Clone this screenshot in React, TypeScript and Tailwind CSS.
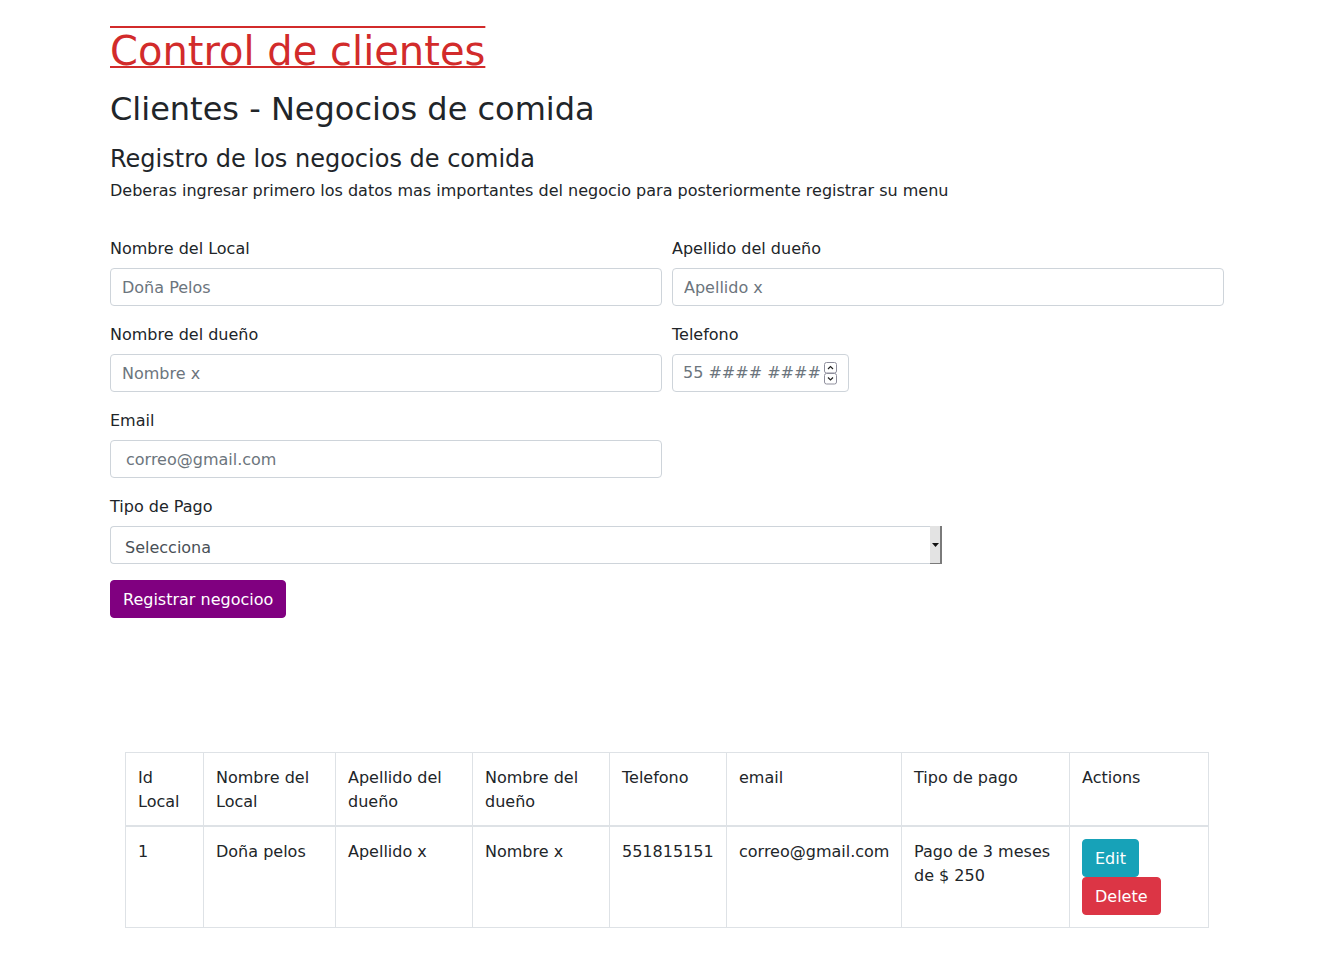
const headers = [
  { label: "Id Local", w: "w-[78px]" },
  { label: "Nombre del Local", w: "w-[132px]" },
  { label: "Apellido del dueño", w: "w-[137px]" },
  { label: "Nombre del dueño", w: "w-[137px]" },
  { label: "Telefono", w: "w-[117px]" },
  { label: "email", w: "w-[175px]" },
  { label: "Tipo de pago", w: "w-[168px]" },
  { label: "Actions", w: "w-[139px]" },
]

const clientes = [
  {
    id: 1,
    local: "Doña pelos",
    apellido: "Apellido x",
    nombre: "Nombre x",
    telefono: "551815151",
    email: "correo@gmail.com",
    pago: "Pago de 3 meses de $ 250",
  },
]

const cell = "border border-[#dee2e6] px-3 pt-[13px] pb-[11px] align-top"

function Field({ label, placeholder, className = "" }: { label: string; placeholder: string; className?: string }) {
  return (
    <div className="mb-[17px]">
      <label className="mb-[7px] block">{label}</label>
      <input
        placeholder={placeholder}
        className={
          "block h-[38px] w-full rounded border border-[#ced4da] bg-white py-1.5 pr-3 text-[#495057] outline-none placeholder:text-[#6c757d] " +
          (className || "pl-[11px]")
        }
      />
    </div>
  )
}

function Spinner() {
  return (
    <svg width="13" height="23" viewBox="0 0 13 23" className="shrink-0">
      <rect x="0.5" y="0.5" width="12" height="10.5" rx="2" fill="#fff" stroke="#8f8f9d" />
      <rect x="0.5" y="11.5" width="12" height="10.5" rx="2" fill="#fff" stroke="#8f8f9d" />
      <path d="M4 7 L6.5 4.5 L9 7" fill="none" stroke="#222" strokeWidth="1.2" />
      <path d="M4 15.5 L6.5 18 L9 15.5" fill="none" stroke="#222" strokeWidth="1.2" />
    </svg>
  )
}

export default function App() {
  return (
    <div className="min-h-screen bg-white font-['DejaVu_Sans',sans-serif] text-[16px] leading-6 text-[#212529]">
      <div className="ml-[110px] w-[1114px] pt-[27px] pb-[38px]">
        <h1 className="text-[40px] leading-[48px] text-[#d22b2b] decoration-2 [text-decoration-line:underline_overline]">
          Control de clientes
        </h1>
        <h2 className="mt-[15px] text-[32px] leading-[38px]">Clientes - Negocios de comida</h2>
        <h4 className="mt-[17px] text-[24px] leading-[29px]">Registro de los negocios de comida</h4>
        <p className="mt-[5px]">
          Deberas ingresar primero los datos mas importantes del negocio para posteriormente registrar su menu
        </p>

        <form className="mt-[34px]">
          <div className="grid grid-cols-2 gap-x-[10px]">
            <Field label="Nombre del Local" placeholder="Doña Pelos" />
            <Field label="Apellido del dueño" placeholder="Apellido x" />
            <Field label="Nombre del dueño" placeholder="Nombre x" />
            <div className="mb-[17px]">
              <label className="mb-[7px] block">Telefono</label>
              <div className="flex h-[38px] w-[177px] items-center rounded border border-[#ced4da] pl-[10px] pr-[11px]">
                <input
                  placeholder="55 #### ####"
                  className="min-w-0 flex-1 bg-white text-[#495057] outline-none placeholder:text-[#6c757d]"
                />
                <Spinner />
              </div>
            </div>
            <Field label="Email" placeholder="correo@gmail.com" className="pl-[15px]" />
            <div />
          </div>

          <div className="mb-4">
            <label className="mb-[7px] block">Tipo de Pago</label>
            <div className="flex h-[38px] w-[832px] items-stretch rounded-l border border-r-0 border-[#ced4da]">
              <span className="flex flex-1 items-center pl-[14px] pt-[5px] text-[#495057]">Selecciona</span>
              <div className="-my-px flex w-[12px] items-center justify-center border-r-2 border-b border-[#7a7a7a] bg-[#e3e3e3]">
                <svg width="7" height="4" viewBox="0 0 7 4">
                  <path d="M0 0 H7 L3.5 4 Z" fill="#111" />
                </svg>
              </div>
            </div>
          </div>

          <button
            type="button"
            className="h-[38px] rounded border border-[#800080] bg-[#800080] px-3 pt-[7px] pb-[5px] leading-6 text-white"
          >
            Registrar negocioo
          </button>
        </form>

        <table className="ml-[15px] mt-[134px] w-[1083px] table-fixed border-collapse border border-[#dee2e6]">
          <thead>
            <tr>
              {headers.map((h) => (
                <th key={h.label} className={`${h.w} ${cell} border-b-2 text-left font-normal`}>
                  {h.label}
                </th>
              ))}
            </tr>
          </thead>
          <tbody>
            {clientes.map((c) => (
              <tr key={c.id}>
                <td className={cell}>{c.id}</td>
                <td className={cell}>{c.local}</td>
                <td className={cell}>{c.apellido}</td>
                <td className={cell}>{c.nombre}</td>
                <td className={cell}>{c.telefono}</td>
                <td className={cell}>{c.email}</td>
                <td className={cell}>{c.pago}</td>
                <td className="border border-[#dee2e6] p-3 align-top">
                  <div className="flex flex-col items-start">
                    <button
                      type="button"
                      className="rounded border border-[#17a2b8] bg-[#17a2b8] px-3 pt-[7px] pb-[5px] text-white"
                    >
                      Edit
                    </button>
                    <button
                      type="button"
                      className="rounded border border-[#dc3545] bg-[#dc3545] px-3 pt-[7px] pb-[5px] text-white"
                    >
                      Delete
                    </button>
                  </div>
                </td>
              </tr>
            ))}
          </tbody>
        </table>
      </div>
    </div>
  )
}
